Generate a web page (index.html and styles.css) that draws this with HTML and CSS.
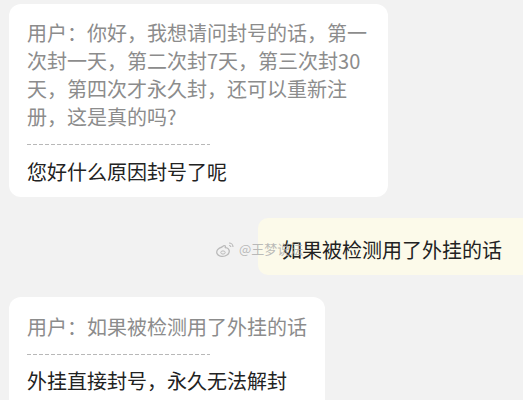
FILE: index.html
```html
<!DOCTYPE html>
<html lang="zh">
<head>
<meta charset="utf-8">
<link rel="stylesheet" href="styles.css">
</head>
<body>
<div class="chat">
  <div class="bubble b1">
    <div class="quote">用户：你好，我想请问封号的话，第一次封一天，第二次封7天，第三次封30天，第四次才永久封，还可以重新注册，这是真的吗?</div>
    <div class="dash"></div>
    <div class="reply">您好什么原因封号了呢</div>
  </div>
  <div class="bubble mine">如果被检测用了外挂的话</div>
  <div class="bubble b3">
    <div class="quote">用户：如果被检测用了外挂的话</div>
    <div class="dash"></div>
    <div class="reply">外挂直接封号，永久无法解封</div>
  </div>
</div>
<div class="watermark">
  <svg width="22" height="18" viewBox="0 0 22 18"><path d="M8 7c-4 1-6 4-5 6.5S8 17 11 16s5-3.5 4-6-3.5-2.5-4-2c1-2 0-3.5-3-1z" fill="none" stroke="#bbb" stroke-width="1.3"/><ellipse cx="9" cy="12.5" rx="2.2" ry="1.6" fill="none" stroke="#bbb" stroke-width="1"/><path d="M15 3a4 4 0 0 1 4 4M15 5.5a1.6 1.6 0 0 1 1.8 1.6" fill="none" stroke="#bbb" stroke-width="1.2"/></svg>
  <span>@王梦说法</span>
</div>
</body>
</html>
```
FILE: styles.css
```css
html, body {
  margin: 0;
  padding: 0;
  background: #f2f2f2;
  overflow: hidden;
}
body {
  width: 523px;
  height: 400px;
  position: relative;
  font-family: "Noto Sans CJK SC", "Noto Sans", sans-serif;
  font-size: 20px;
  line-height: 28px;
}
.chat {
  display: flex;
  flex-direction: column;
  align-items: flex-start;
  padding-top: 4px;
}
.bubble {
  background: #ffffff;
  border-radius: 12px;
  box-sizing: border-box;
}
.b1 {
  margin-left: 9px;
  width: 379px;
  height: 193px;
  padding: 15px 14px 11px 18px;
}
.quote {
  color: #8c8c8c;
  letter-spacing: 0;
}
.reply {
  color: #222;
}
.dash {
  width: 183px;
  height: 1px;
  margin: 13px 0 13px;
  background: repeating-linear-gradient(90deg, #b8b8b8 0 4px, transparent 4px 6px);
}
.mine {
  align-self: flex-end;
  margin-top: 21px;
  width: 265px;
  height: 57px;
  padding: 18px 0 11px 24px;
  background: #fcfaea;
  border-radius: 10px 0 0 10px;
  color: #222;
  white-space: nowrap;
}
.b3 {
  margin-top: 22px;
  margin-left: 9px;
  width: 316px;
  height: 120px;
  padding: 16px 10px 0 18px;
}
.b3 .dash {
  margin: 13px 0 12px;
}
.watermark {
  position: absolute;
  left: 214px;
  top: 240px;
  display: flex;
  align-items: center;
  gap: 3px;
  color: rgba(170, 170, 170, 0.8);
  font-size: 13px;
  line-height: 18px;
}
```
